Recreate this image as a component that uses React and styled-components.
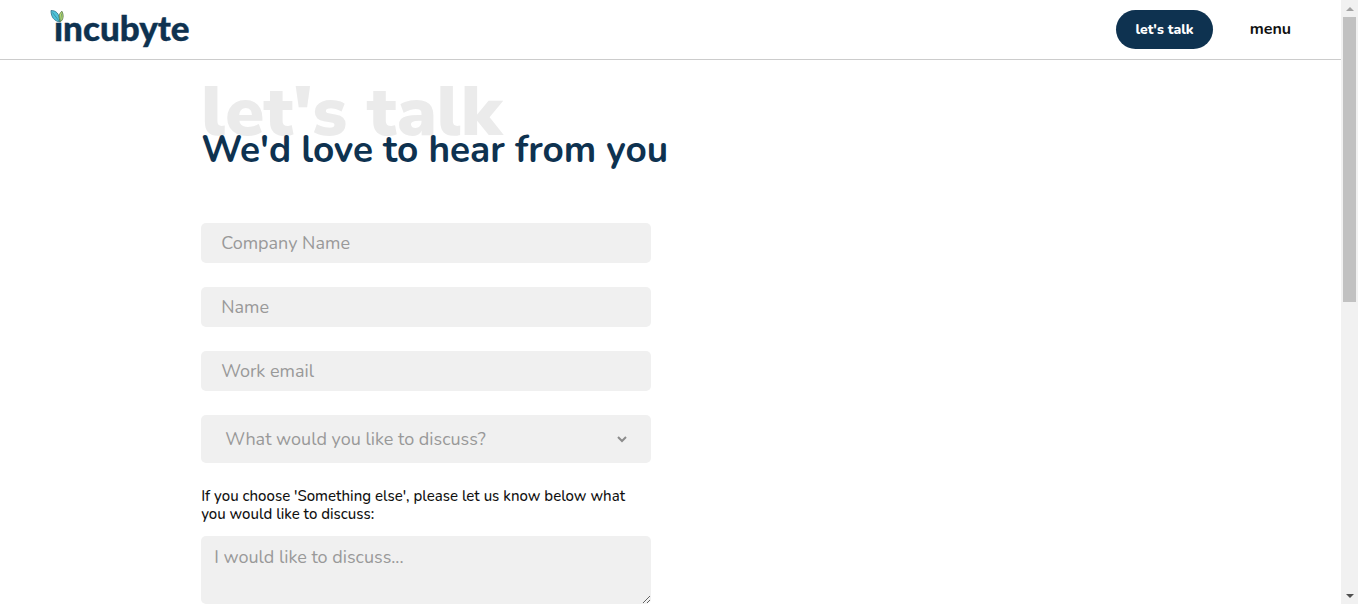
import React from "react";
import styled, { createGlobalStyle } from "styled-components";

const navy = "#0e3250";
const field = "#f0f0f0";
const hint = "#999999";

const GlobalStyle = createGlobalStyle`
  *, *::before, *::after { box-sizing: border-box; }
  body {
    margin: 0;
    background: #fff;
    color: #111;
    font-family: Nunito, "Open Sans", "Noto Sans", sans-serif;
  }
`;

const Window = styled.div`
  display: flex;
  height: 100vh;
  overflow: hidden;
`;

const Page = styled.div`
  flex: 1;
  min-width: 0;
  overflow: hidden;
`;

const Header = styled.header`
  display: flex;
  align-items: center;
  justify-content: space-between;
  height: 60px;
  padding: 0 50px;
  border-bottom: 1px solid #cccccc;
`;

const LogoLink = styled.a`
  display: block;
  height: 44px;
  color: ${navy};

  svg { display: block; overflow: visible; }
  text {
    font-family: Lato, sans-serif;
    font-weight: 900;
    font-size: 35px;
  }
`;

const Nav = styled.nav`
  display: flex;
  align-items: center;
  gap: 37px;
`;

const TalkLink = styled.a`
  padding: 0 19px;
  border-radius: 20px;
  background: ${navy};
  color: #fff;
  font-size: 14px;
  font-weight: 800;
  line-height: 39px;
  text-decoration: none;
`;

const MenuButton = styled.button`
  padding: 0 0 2px;
  border: 0;
  background: none;
  color: #111;
  font: inherit;
  font-size: 16px;
  font-weight: 700;
  line-height: 36px;
`;

const Main = styled.main`
  width: 70%;
  margin: 0 auto;
  padding-top: 17px;
`;

const Eyebrow = styled.p`
  margin: 0;
  color: #ebebeb;
  font-family: "Nunito Sans", "Open Sans", sans-serif;
  font-size: 70px;
  font-weight: 900;
  line-height: 70px;
`;

const Title = styled.h1`
  position: relative;
  margin: -22px 0 0;
  color: ${navy};
  font-size: 37px;
  font-weight: 700;
  line-height: 50px;
`;

const Form = styled.form`
  display: flex;
  flex-direction: column;
  gap: 24px;
  max-width: 450px;
  padding-top: 48px;
`;

const Input = styled.input`
  width: 100%;
  height: 40px;
  padding: 0 20px;
  border: 0;
  border-radius: 5px;
  background: ${field};
  font: inherit;
  font-size: 18px;

  &::placeholder { color: ${hint}; opacity: 1; }
`;

const SelectBox = styled.div`
  display: grid;
  align-items: center;

  > * { grid-area: 1 / 1; }
  svg { justify-self: end; margin-right: 24px; pointer-events: none; }
`;

const Select = styled.select`
  appearance: none;
  width: 100%;
  height: 48px;
  padding: 0 24px;
  border: 0;
  border-radius: 5px;
  background: ${field};
  color: ${hint};
  font: inherit;
  font-size: 18px;
`;

const Question = styled.div`
  display: flex;
  flex-direction: column;
  gap: 13px;
`;

const Label = styled.label`
  padding-right: 12px;
  font-size: 15px;
  font-weight: 500;
  line-height: 18px;
`;

const TextArea = styled.textarea`
  display: block;
  width: 100%;
  height: 68px;
  padding: 8px 13px;
  border: 0;
  border-radius: 5px;
  background: ${field};
  font: inherit;
  font-size: 18px;
  line-height: 26px;
  resize: vertical;

  &::placeholder { color: ${hint}; opacity: 1; }
`;

const ScrollTrack = styled.div`
  display: flex;
  flex-direction: column;
  width: 17px;
  background: #f1f1f1;
`;

const ScrollArrow = styled.button`
  display: grid;
  place-items: center;
  height: 17px;
  padding: 0;
  border: 0;
  background: none;
`;

const ScrollRail = styled.div`
  flex: 1;
  padding: 0 2px;
`;

const ScrollThumb = styled.div`
  height: 50%;
  background: #c1c1c1;
`;

function Logo() {
  return (
    <svg width="142" height="44" viewBox="0 0 142 44" role="img" aria-label="incubyte">
      <text x="4" y="33" fill="currentColor" stroke="currentColor" strokeWidth="0.4">incubyte</text>
      <path d="M0 0h14v14H0z" fill="#fff" />
      <path
        d="M1 2.500C6 2.500 9.800 5.500 9.800 14 4.500 13 1 9.500 1 2.500Z"
        fill="#4fc3d9" stroke="#2b6f86" strokeWidth="0.8"
      />
      <path
        d="M10.300 14C8.500 9 8.800 5.500 12 3.300 14 7.500 13.300 11.800 10.300 14Z"
        fill="#bfe070" stroke="#4d7048" strokeWidth="0.8"
      />
      <path d="M2.500 4.500 9 13M11.700 5.500 10.500 13" stroke="#2b6473" strokeWidth="0.500" fill="none" />
    </svg>
  );
}

const fields = [
  { id: "company", label: "Company Name", type: "text" },
  { id: "name", label: "Name", type: "text" },
  { id: "email", label: "Work email", type: "email" },
];

export default function App() {
  return (
    <Window>
      <GlobalStyle />
      <Page>
        <Header>
          <LogoLink href="#home"><Logo /></LogoLink>
          <Nav>
            <TalkLink href="#talk">let's talk</TalkLink>
            <MenuButton type="button">menu</MenuButton>
          </Nav>
        </Header>
        <Main>
          <Eyebrow>let's talk</Eyebrow>
          <Title>We'd love to hear from you</Title>
          <Form>
            {fields.map((f) => (
              <Input key={f.id} id={f.id} type={f.type} placeholder={f.label} aria-label={f.label} />
            ))}
            <SelectBox>
              <Select aria-label="What would you like to discuss?">
                <option>What would you like to discuss?</option>
              </Select>
              <svg width="10" height="8" viewBox="0 0 10 8" fill="none" stroke="#8c8c8c" strokeWidth="2" aria-hidden="true">
                <path d="M1 2 5 6 9 2" />
              </svg>
            </SelectBox>
            <Question>
              <Label htmlFor="topic">
                If you choose 'Something else', please let us know below what you would like to discuss:
              </Label>
              <TextArea id="topic" placeholder="I would like to discuss..." />
            </Question>
          </Form>
        </Main>
      </Page>
      <ScrollTrack>
        <ScrollArrow type="button" aria-label="Scroll up">
          <svg width="8" height="4" viewBox="0 0 8 4" aria-hidden="true"><path d="M4 0 8 4H0Z" fill="#a3a3a3" /></svg>
        </ScrollArrow>
        <ScrollRail><ScrollThumb /></ScrollRail>
        <ScrollArrow type="button" aria-label="Scroll down">
          <svg width="8" height="4" viewBox="0 0 8 4" aria-hidden="true"><path d="M4 4 8 0H0Z" fill="#505050" /></svg>
        </ScrollArrow>
      </ScrollTrack>
    </Window>
  );
}
